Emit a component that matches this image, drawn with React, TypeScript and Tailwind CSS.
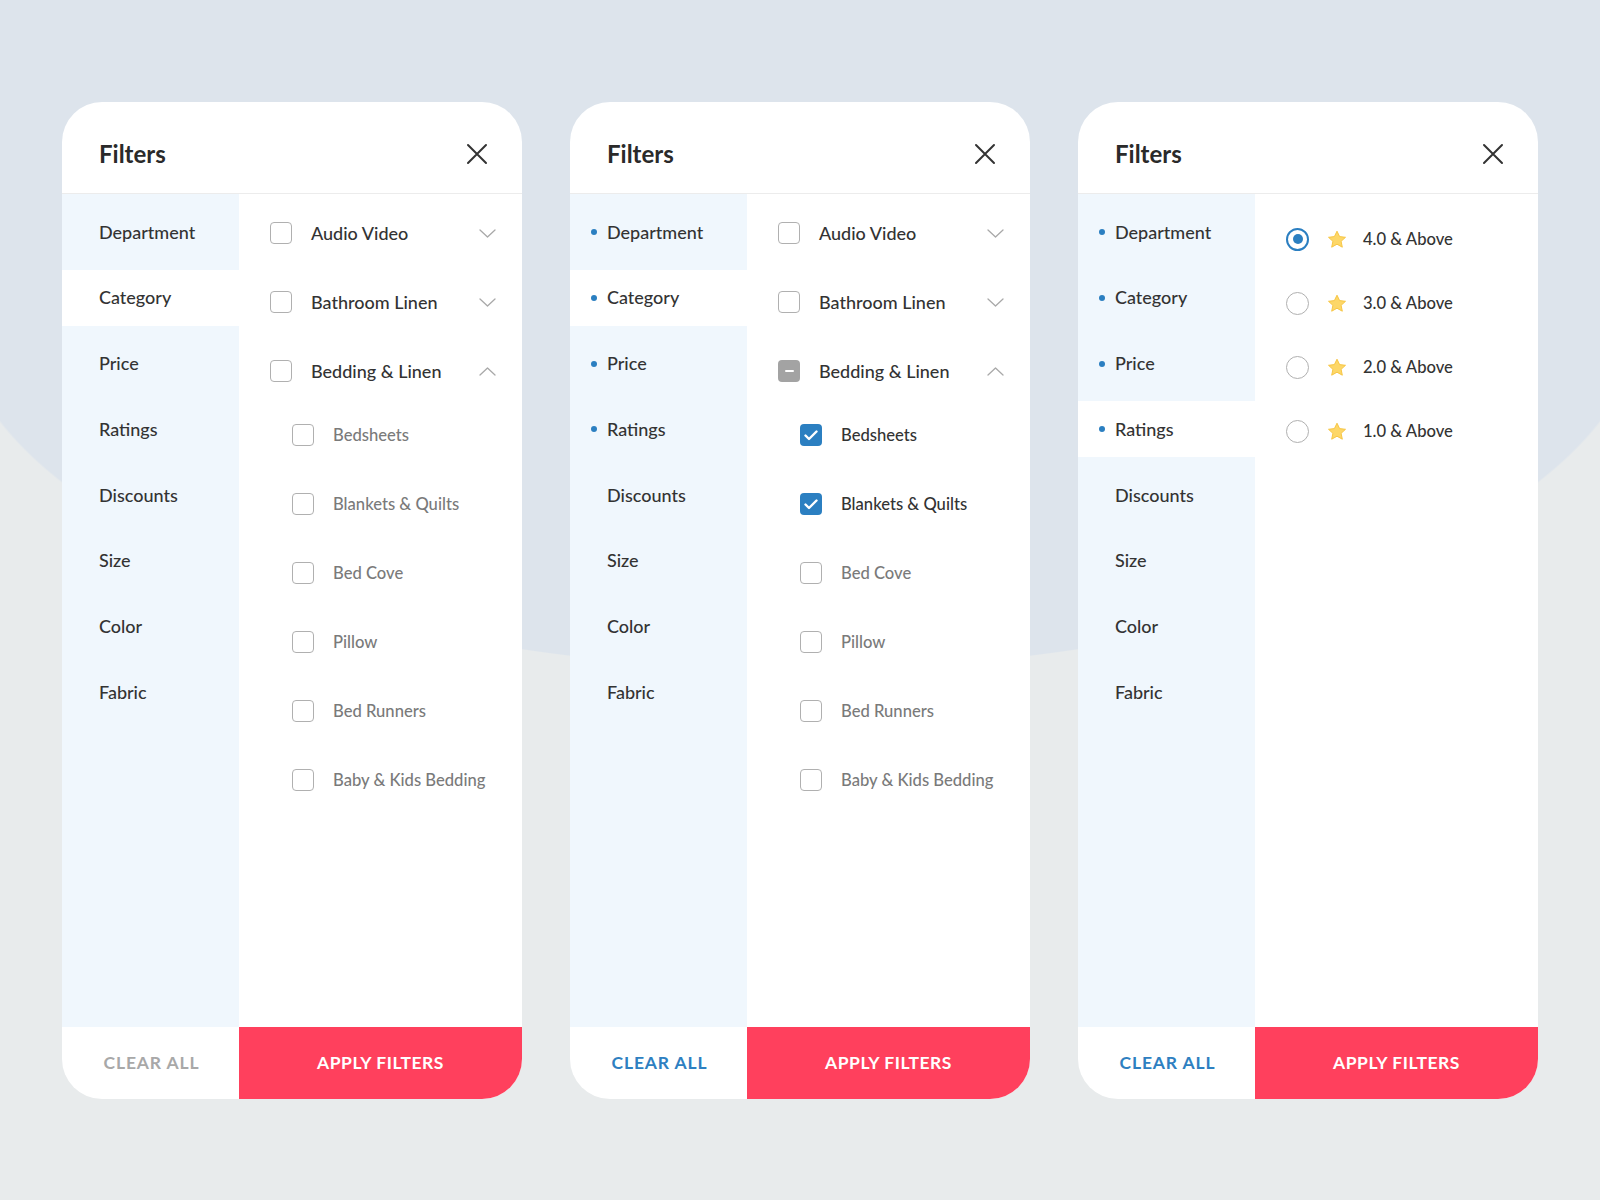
import type { ReactNode } from 'react'

type CheckState = 'off' | 'on' | 'mixed'

interface SubItem {
  label: string
  checked: boolean
}

interface Group {
  label: string
  state: CheckState
  open?: boolean
  children?: SubItem[]
}

interface PanelConfig {
  active: string
  marked: string[]
  clearEnabled: boolean
  body: 'category' | 'ratings'
  groups?: Group[]
  rating?: number
}

const SECTIONS = ['Department', 'Category', 'Price', 'Ratings', 'Discounts', 'Size', 'Color', 'Fabric']

const BEDDING = ['Bedsheets', 'Blankets & Quilts', 'Bed Cove', 'Pillow', 'Bed Runners', 'Baby & Kids Bedding']

const RATINGS = [4, 3, 2, 1]

const buildGroups = (checked: string[]): Group[] => [
  { label: 'Audio Video', state: 'off' },
  { label: 'Bathroom Linen', state: 'off' },
  {
    label: 'Bedding & Linen',
    state: checked.length ? 'mixed' : 'off',
    open: true,
    children: BEDDING.map((label) => ({ label, checked: checked.includes(label) })),
  },
]

const PANELS: PanelConfig[] = [
  { active: 'Category', marked: [], clearEnabled: false, body: 'category', groups: buildGroups([]) },
  {
    active: 'Category',
    marked: ['Department', 'Category', 'Price', 'Ratings'],
    clearEnabled: true,
    body: 'category',
    groups: buildGroups(['Bedsheets', 'Blankets & Quilts']),
  },
  {
    active: 'Ratings',
    marked: ['Department', 'Category', 'Price', 'Ratings'],
    clearEnabled: true,
    body: 'ratings',
    rating: 4,
  },
]

function Checkbox({ state }: { state: CheckState }) {
  if (state === 'on') {
    return (
      <span className="w-[22px] h-[22px] rounded-[4px] bg-[#2b7fc1] flex items-center justify-center shrink-0">
        <svg width="14" height="11" viewBox="0 0 14 11" fill="none" aria-hidden="true">
          <path d="M1.5 5.5 L5 9 L12.5 1.5" stroke="#fff" strokeWidth="2.4" strokeLinecap="round" strokeLinejoin="round" />
        </svg>
      </span>
    )
  }
  if (state === 'mixed') {
    return (
      <span className="w-[22px] h-[22px] rounded-[4px] bg-[#a3a3a3] flex items-center justify-center shrink-0">
        <span className="w-[9px] h-[2.5px] rounded-full bg-white" />
      </span>
    )
  }
  return <span className="w-[22px] h-[22px] rounded-[4px] border-[1.5px] border-[#b0b0b0] bg-white shrink-0" />
}

function Chevron({ up }: { up?: boolean }) {
  return (
    <svg width="17" height="9" viewBox="0 0 17 9" fill="none" aria-hidden="true" className="shrink-0">
      <path
        d={up ? 'M1 8 L8.5 1 L16 8' : 'M1 1 L8.5 8 L16 1'}
        stroke="#a9a9a9"
        strokeWidth="1.3"
        strokeLinecap="round"
        strokeLinejoin="round"
      />
    </svg>
  )
}

function Star() {
  return (
    <svg width="20" height="19" viewBox="0 0 20 19" aria-hidden="true" className="shrink-0">
      <path
        d="M10 1.2 L12.6 6.6 L18.5 7.3 L14.1 11.3 L15.3 17.2 L10 14.2 L4.7 17.2 L5.9 11.3 L1.5 7.3 L7.4 6.6 Z"
        fill="#fdd768"
        stroke="#f7c645"
        strokeWidth="1"
        strokeLinejoin="round"
      />
    </svg>
  )
}

function Radio({ selected }: { selected: boolean }) {
  return selected ? (
    <span className="w-[23px] h-[23px] rounded-full border-[2.5px] border-[#2b7fc1] flex items-center justify-center shrink-0">
      <span className="w-[10px] h-[10px] rounded-full bg-[#2b7fc1]" />
    </span>
  ) : (
    <span className="w-[23px] h-[23px] rounded-full border-[1.5px] border-[#b0b0b0] shrink-0" />
  )
}

function CategoryList({ groups }: { groups: Group[] }) {
  return (
    <div className="flex flex-col gap-[23px] pt-[16px]">
      {groups.map((group) => (
        <div key={group.label} className="flex flex-col">
          <div className="h-[46px] flex items-center pl-[31px] pr-[26px]">
            <Checkbox state={group.state} />
            <span className="ml-[19px] flex-1 text-[18px] font-medium text-[#333]">{group.label}</span>
            <Chevron up={group.open} />
          </div>
          {group.open && group.children && (
            <div className="flex flex-col gap-[23px] mt-[18px]">
              {group.children.map((child) => (
                <div key={child.label} className="h-[46px] flex items-center pl-[53px]">
                  <Checkbox state={child.checked ? 'on' : 'off'} />
                  <span
                    className={`ml-[19px] text-[16.6px] font-medium ${child.checked ? 'text-[#333]' : 'text-[#7a7a7a]'}`}
                  >
                    {child.label}
                  </span>
                </div>
              ))}
            </div>
          )}
        </div>
      ))}
    </div>
  )
}

function RatingList({ value }: { value: number }) {
  return (
    <div className="flex flex-col gap-[18px] pt-[22px]">
      {RATINGS.map((r) => (
        <div key={r} className="h-[46px] flex items-center pl-[31px]">
          <Radio selected={r === value} />
          <span className="ml-[18px]">
            <Star />
          </span>
          <span className="ml-[16px] text-[16.6px] font-medium text-[#333]">{r.toFixed(1)} &amp; Above</span>
        </div>
      ))}
    </div>
  )
}

function SidebarItem({ label, active, marked }: { label: string; active: boolean; marked: boolean }) {
  return (
    <div className={`h-[56px] flex items-center pl-[21px] ${active ? 'bg-white' : ''}`}>
      <span className={`w-[6px] h-[6px] rounded-full ${marked ? 'bg-[#2b7fc1]' : ''}`} />
      <span className="ml-[10px] text-[18px] font-medium text-[#333]">{label}</span>
    </div>
  )
}

function FilterPanel({ config }: { config: PanelConfig }) {
  let body: ReactNode = null
  if (config.body === 'category' && config.groups) body = <CategoryList groups={config.groups} />
  if (config.body === 'ratings') body = <RatingList value={config.rating ?? 0} />

  return (
    <section className="w-[460px] h-[997px] bg-white rounded-[40px] overflow-hidden flex flex-col">
      <header className="h-[92px] pt-[12px] pl-[37px] pr-[34px] flex items-center justify-between border-b border-[#ececec]">
        <h2 className="text-[24px] font-bold text-[#2a2a2a]">Filters</h2>
        <svg width="22" height="22" viewBox="0 0 22 22" fill="none" aria-hidden="true">
          <path d="M2 2 L20 20 M20 2 L2 20" stroke="#333" strokeWidth="2" strokeLinecap="round" />
        </svg>
      </header>

      <div className="flex-1 flex min-h-0">
        <nav className="w-[177px] bg-[#f0f7fd] flex flex-col gap-[9.75px] pt-[10px]">
          {SECTIONS.map((s) => (
            <SidebarItem key={s} label={s} active={s === config.active} marked={config.marked.includes(s)} />
          ))}
        </nav>
        <div className="flex-1">{body}</div>
      </div>

      <footer className="h-[72px] flex">
        <button
          type="button"
          className={`w-[177px] pl-[2px] text-[17.5px] font-bold tracking-[0.05em] ${
            config.clearEnabled ? 'text-[#2e80c1]' : 'text-[#a8a8a8]'
          }`}
        >
          CLEAR ALL
        </button>
        <button type="button" className="flex-1 bg-[#ff405d] text-white text-[17.5px] font-bold tracking-[0.03em]">
          APPLY FILTERS
        </button>
      </footer>
    </section>
  )
}

export default function App() {
  return (
    <div
      className="w-full h-[1200px] font-['Lato',sans-serif] bg-[radial-gradient(ellipse_845px_364px_at_800px_306px,#dde4ec_99.7%,transparent_100%),linear-gradient(#dde4ec_306px,#e8ebec_306px)]"
    >
      <div className="flex justify-center gap-[48px] pt-[102px]">
        {PANELS.map((p, i) => (
          <FilterPanel key={i} config={p} />
        ))}
      </div>
    </div>
  )
}
